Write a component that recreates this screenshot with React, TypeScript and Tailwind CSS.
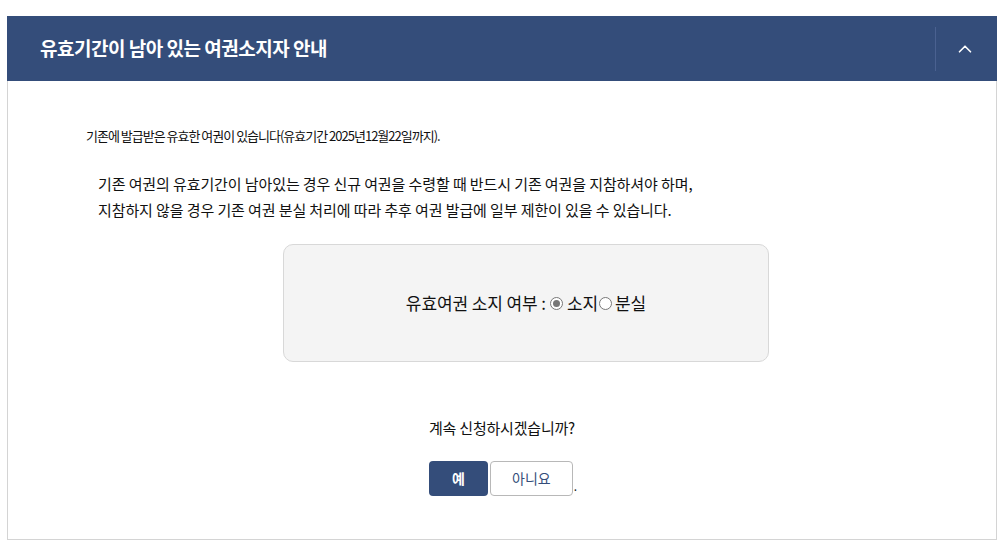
import { ChevronUp } from "lucide-react";

const FONT = { fontFamily: '"Noto Sans CJK KR", "Noto Sans", sans-serif' };

export default function App() {
  return (
    <div className="min-h-screen bg-white pt-4" style={FONT}>
      <div className="ml-[7px] w-[990px]">
        <div className="flex h-[65px] items-center bg-[#344d7a]">
          <h2 className="flex-1 pl-[33px] text-[19px] font-bold tracking-[-0.5px] text-white">
            유효기간이 남아 있는 여권소지자 안내
          </h2>
          <div className="h-[44px] w-px bg-[#4a6190]" />
          <button className="flex w-[61px] items-center justify-center pr-[4px] text-white">
            <ChevronUp size={22} strokeWidth={1.8} />
          </button>
        </div>
        <div className="h-[459px] border-x border-b border-[#d4d4d4] bg-white">
          <p className="pl-[78px] pt-[46px] text-[13px] leading-[18px] tracking-[-1px] text-[#111]">
            기존에 발급받은 유효한 여권이 있습니다(유효기간 2025년12월22일까지).
          </p>
          <p className="mt-[26px] pl-[90px] text-[15px] leading-[26px] tracking-[-0.1px] text-[#111]">
            기존 여권의 유효기간이 남아있는 경우 신규 여권을 수령할 때 반드시 기존 여권을 지참하셔야 하며,
            <br />
            지참하지 않을 경우 기존 여권 분실 처리에 따라 추후 여권 발급에 일부 제한이 있을 수 있습니다.
          </p>
          <div className="ml-[275px] mt-[21px] flex h-[118px] w-[486px] items-center justify-center rounded-[10px] border border-[#d8d8d8] bg-[#f4f4f4] text-[17px] tracking-[-0.1px] text-[#111]">
            <span>유효여권 소지 여부 :</span>
            <span className="ml-[4px] flex items-center">
              <span className="flex h-[13px] w-[13px] items-center justify-center rounded-full border border-[#777] bg-white">
                <span className="h-[7px] w-[7px] rounded-full bg-[#777]" />
              </span>
              <span className="ml-[4px]">소지</span>
            </span>
            <span className="ml-[1px] flex items-center">
              <span className="h-[13px] w-[13px] rounded-full border border-[#777] bg-white" />
              <span className="ml-[3px]">분실</span>
            </span>
          </div>
          <p className="mt-[55px] text-center text-[15px] tracking-[-0.2px] text-[#111]">
            계속 신청하시겠습니까?
          </p>
          <div className="mt-[21px] flex items-end justify-center pl-[2px]">
            <button className="h-[35px] w-[59px] rounded-[4px] bg-[#344d7a] text-[14px] font-bold text-white">
              예
            </button>
            <button className="ml-[2px] h-[35px] w-[83px] rounded-[4px] border border-[#b8b8b8] bg-white text-[14px] text-[#344d7a]">
              아니요
            </button>
            <span className="mb-[4px] ml-[1px] text-[12px] leading-none text-[#222]">.</span>
          </div>
        </div>
      </div>
    </div>
  );
}
